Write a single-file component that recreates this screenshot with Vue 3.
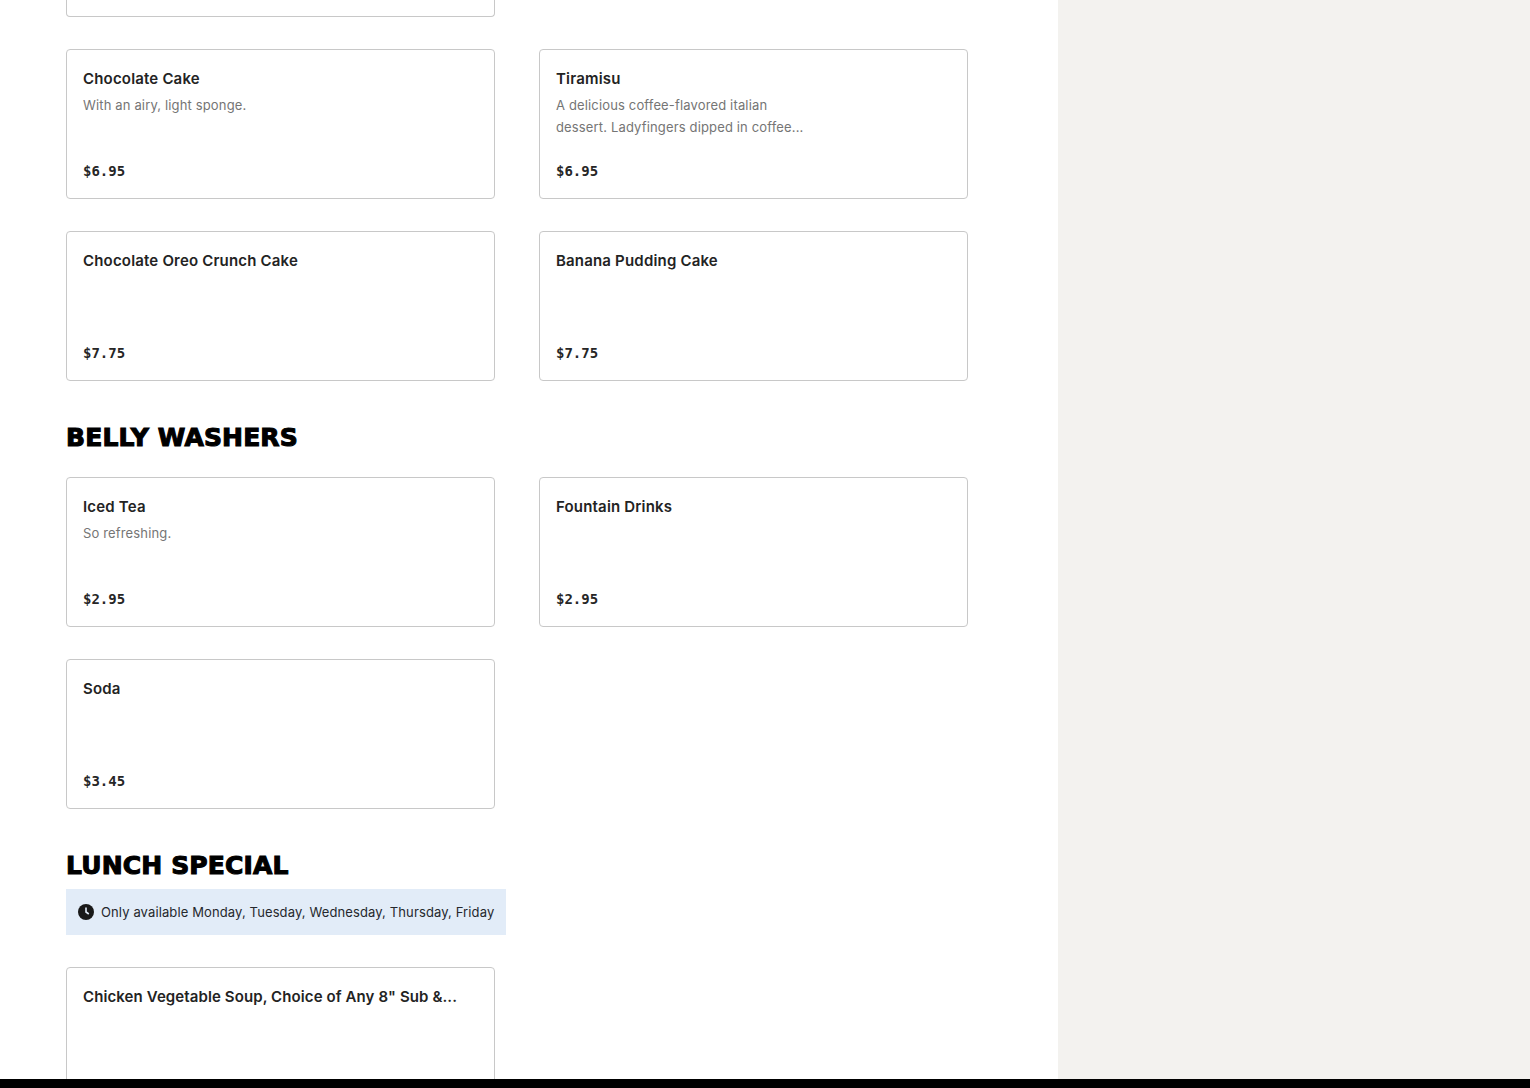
<script setup>
const top = [
  { name: 'Chocolate Cake', desc: 'With an airy, light sponge.', price: '$6.95' },
  { name: 'Tiramisu', desc: 'A delicious coffee-flavored italian dessert. Ladyfingers dipped in coffee...', price: '$6.95' },
  { name: 'Chocolate Oreo Crunch Cake', price: '$7.75' },
  { name: 'Banana Pudding Cake', price: '$7.75' },
]
const belly = [
  { name: 'Iced Tea', desc: 'So refreshing.', price: '$2.95' },
  { name: 'Fountain Drinks', price: '$2.95' },
  { name: 'Soda', price: '$3.45' },
]
</script>

<template>
  <div class="page">
    <main class="menu">
      <div class="stub"></div>
      <div class="grid first">
        <article v-for="i in top" :key="i.name" class="card">
          <h3>{{ i.name }}</h3>
          <p>{{ i.desc }}</p>
          <span class="price">{{ i.price }}</span>
        </article>
      </div>
      <h2>BELLY WASHERS</h2>
      <div class="grid">
        <article v-for="i in belly" :key="i.name" class="card">
          <h3>{{ i.name }}</h3>
          <p>{{ i.desc }}</p>
          <span class="price">{{ i.price }}</span>
        </article>
      </div>
      <h2>LUNCH SPECIAL</h2>
      <div class="notice">
        <svg class="clock" width="16" height="16" viewBox="0 0 16 16"><circle cx="8" cy="8" r="8" fill="#191919"/><path d="M8 3.6V8l2.8 2" fill="none" stroke="#e2ecf8" stroke-width="1.6"/></svg>
        <span>Only available Monday, Tuesday, Wednesday, Thursday, Friday</span>
      </div>
      <div class="grid">
        <article class="card">
          <h3 class="nowrap">Chicken Vegetable Soup, Choice of Any 8" Sub &amp;...</h3>
          <p></p>
        </article>
      </div>
    </main>
    <aside class="side"></aside>
    <div class="bar"></div>
  </div>
</template>

<style scoped>
.page { height: 1088px; overflow: hidden; display: flex; position: relative; background: #fff; font-family: "Inter", "Liberation Sans", sans-serif; color: #191919; }
.menu { width: 1058px; box-sizing: border-box; padding: 0 90px 0 66px; flex: none; }
.side { flex: 1; background: #f3f2ef; }
.bar { position: absolute; left: 0; right: 0; bottom: 0; height: 9px; background: #000; }
.stub { height: 17px; width: 429px; box-sizing: border-box; border: 1px solid #c8c8c8; border-top: 0; border-radius: 0 0 4px 4px; }
.grid { display: grid; grid-template-columns: 429px 429px; column-gap: 44px; row-gap: 32px; }
.first { margin-top: 32px; }
.card { height: 150px; box-sizing: border-box; border: 1px solid #c8c8c8; border-radius: 4px; padding: 16px; display: flex; flex-direction: column; }
h3 { margin: 0; padding-top: 1px; font-size: 15px; letter-spacing: 0.18px; line-height: 24px; font-weight: 600; color: #232323; }
.nowrap { white-space: nowrap; letter-spacing: 0.1px; }
p { margin: 3px 0 0; font-size: 13px; letter-spacing: 0.15px; line-height: 22px; color: #757575; width: 258px; height: 44px; }
.price { margin-top: auto; font-family: "DejaVu Sans Mono", monospace; font-size: 14px; font-weight: 700; line-height: 22px; color: #262626; }
h2 { margin: 40px 0 22px; font-family: "DejaVu Sans", sans-serif; font-weight: 700; font-size: 25px; line-height: 34px; letter-spacing: 0.15px; -webkit-text-stroke: 1.1px #000; color: #000; }
.notice { width: 440px; height: 46px; box-sizing: border-box; margin: -16px 0 32px; padding: 0 12px; display: flex; align-items: center; gap: 7px; background: #e2ecf8; font-size: 13px; letter-spacing: 0.12px; white-space: nowrap; color: #25282d; }
.clock { flex: none; }
</style>
